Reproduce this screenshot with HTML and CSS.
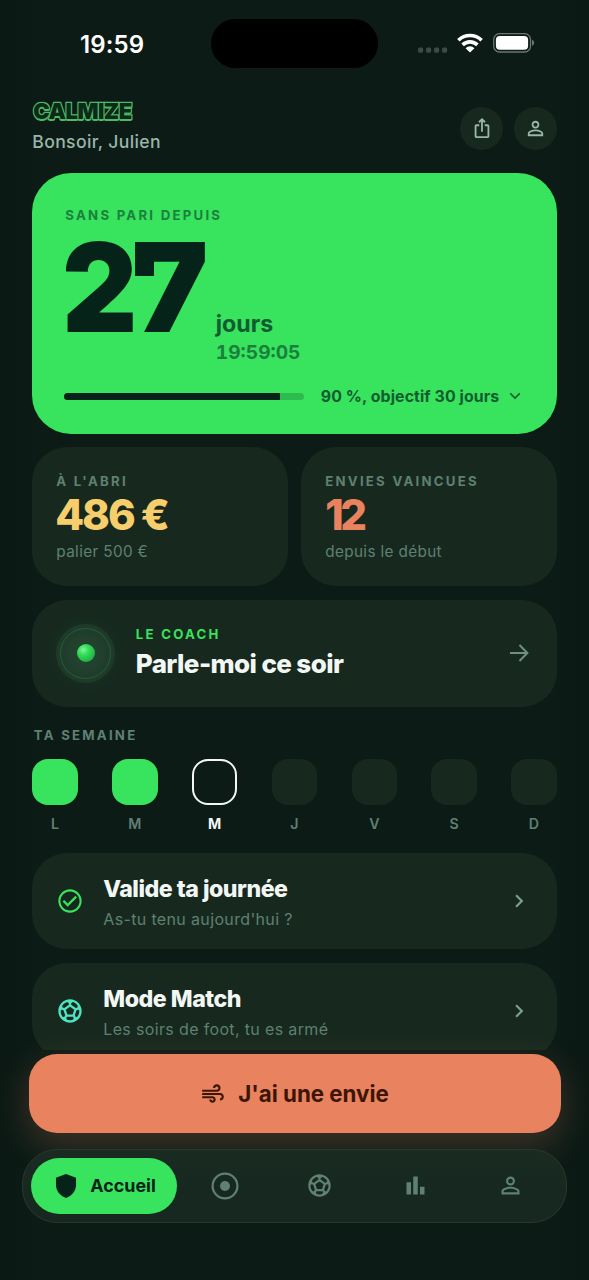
FILE: index.html
```html
<!DOCTYPE html>
<html lang="fr">
<head>
<meta charset="utf-8">
<title>Calmize</title>
<link rel="stylesheet" href="styles.css">
</head>
<body>
<svg class="defs" width="0" height="0" aria-hidden="true">
  <symbol id="i-person" viewBox="0 0 24 24"><path d="M12 5.9c1.16 0 2.1.94 2.1 2.1s-.94 2.1-2.1 2.1S9.9 9.16 9.9 8s.94-2.1 2.1-2.1m0 9c2.97 0 6.1 1.46 6.1 2.1v1.1H5.9V17c0-.64 3.13-2.1 6.1-2.1M12 4C9.79 4 8 5.79 8 8s1.79 4 4 4 4-1.79 4-4-1.79-4-4-4zm0 9c-2.67 0-8 1.34-8 4v3h16v-3c0-2.66-5.33-4-8-4z"/></symbol>
  <symbol id="i-ball" viewBox="0 0 24 24"><path d="M12 2C6.48 2 2 6.48 2 12s4.48 10 10 10 10-4.48 10-10S17.52 2 12 2zm1 3.3l1.35-.95c1.82.56 3.37 1.76 4.38 3.34l-.39 1.34-1.35.46L13 6.7V5.3zm-3.35-.95L11 5.3v1.4L7.01 9.49l-1.35-.46-.39-1.34c1.01-1.57 2.56-2.77 4.38-3.34zM7.08 17.11l-1.14.1C4.73 15.81 4 13.99 4 12c0-.12.01-.23.02-.35l1-.73 1.38.48 1.46 4.34-.78 1.37zm7.42 2.48c-.79.26-1.63.41-2.5.41s-1.71-.15-2.5-.41l-.69-1.49.64-1.1h5.11l.64 1.11-.7 1.48zM14.27 15H9.73l-1.35-4.02L12 8.44l3.63 2.54L14.27 15zm3.79 2.21l-1.14-.1-.79-1.37 1.46-4.34 1.39-.47 1 .73c.01.11.02.22.02.34 0 1.99-.73 3.81-1.94 5.21z"/></symbol>
  <symbol id="i-chevron" viewBox="0 0 24 24"><path d="M10 6 8.59 7.41 13.17 12l-4.58 4.59L10 18l6-6z"/></symbol>
</svg>
<div class="phone">
  <div class="status">
    <span class="clock">19:59</span>
    <span class="island"></span>
    <span class="status-icons">
      <svg class="signal" width="30" height="6" viewBox="0 0 30 6"><rect x="0" y="0.5" width="5.2" height="5.2" rx="1.6"/><rect x="8" y="0.5" width="5.2" height="5.2" rx="1.6"/><rect x="16" y="0.5" width="5.2" height="5.2" rx="1.6"/><rect x="24" y="0.5" width="5.2" height="5.2" rx="1.6"/></svg>
      <svg class="wifi" width="26" height="20" viewBox="0 0 26 20"><g fill="none" stroke="#fff" stroke-width="3.6"><path d="M1.4 7.2a16.8 16.8 0 0 1 23.2 0"/><path d="M5.6 11.9a10.6 10.6 0 0 1 14.8 0"/></g><path fill="#fff" d="M8.6 15.2a6.2 6.2 0 0 1 8.8 0L13 19.6z"/></svg>
      <svg class="battery" width="42" height="20" viewBox="0 0 42 20"><rect x=".7" y=".7" width="36.8" height="18.3" rx="5.8" fill="none" stroke="#6b7572" stroke-width="1.3"/><rect x="2.9" y="2.9" width="32.2" height="13.8" rx="3.9" fill="#fff"/><path d="M39 6.8c2.9 1 2.9 5 0 6z" fill="#6b7572"/></svg>
    </span>
  </div>

  <main class="scroll">
    <header class="header">
      <div class="brand">
        <div class="logo">CALMIZE</div>
        <div class="hello">Bonsoir, Julien</div>
      </div>
      <div class="actions">
        <span class="round"><svg width="22" height="22" viewBox="0 0 24 24"><path d="M16 5l-1.42 1.42-1.59-1.59V16h-1.98V4.83L9.42 6.42 8 5l4-4 4 4zm4 5v11c0 1.1-.9 2-2 2H6c-1.11 0-2-.9-2-2V10c0-1.11.89-2 2-2h3v2H6v11h12V10h-3V8h3c1.1 0 2 .89 2 2z"/></svg></span>
        <span class="round"><svg width="23" height="23"><use href="#i-person"/></svg></span>
      </div>
    </header>

    <section class="hero">
      <div class="label hero-label">SANS PARI DEPUIS</div>
      <div class="count">
        <div class="number"><span class="two">2</span><span class="seven">7</span></div>
        <div class="unit">
          <div class="days">jours</div>
          <div class="timer">19:59:05</div>
        </div>
      </div>
      <div class="goal">
        <div class="bar"><div class="fill" style="width:90%"></div></div>
        <div class="goal-text">90 %, objectif 30 jours</div>
        <svg width="12" height="8" viewBox="0 0 12 8"><path d="M1.3 1.4 6 6.1l4.7-4.7" fill="none" stroke="#155d31" stroke-width="1.5"/></svg>
      </div>
    </section>

    <section class="stats">
      <div class="card stat">
        <div class="label">À L'ABRI</div>
        <div class="value gold">486 €</div>
        <div class="sub">palier 500 €</div>
      </div>
      <div class="card stat">
        <div class="label">ENVIES VAINCUES</div>
        <div class="value coral">12</div>
        <div class="sub">depuis le début</div>
      </div>
    </section>

    <section class="card coach">
      <div class="orb"><div class="ring"><div class="core"></div></div></div>
      <div class="grow">
        <div class="label green">LE COACH</div>
        <div class="coach-title">Parle-moi ce soir</div>
      </div>
      <svg class="arrow" width="28" height="28" viewBox="0 0 24 24"><path d="M4.3 12H19M12.4 5.2l6.8 6.8-6.8 6.8" fill="none" stroke="#6f9080" stroke-width="1.7"/></svg>
    </section>

    <div class="label week-label">TA SEMAINE</div>
    <section class="week">
      <div class="day done"><i></i>L</div>
      <div class="day done"><i></i>M</div>
      <div class="day today"><i></i>M</div>
      <div class="day"><i></i>J</div>
      <div class="day"><i></i>V</div>
      <div class="day"><i></i>S</div>
      <div class="day"><i></i>D</div>
    </section>

    <section class="card row">
      <svg class="row-icon check" width="28" height="28" viewBox="0 0 24 24"><path d="M12 2C6.48 2 2 6.48 2 12s4.48 10 10 10 10-4.48 10-10S17.52 2 12 2zm0 18.2c-4.52 0-8.2-3.68-8.2-8.2S7.48 3.8 12 3.8s8.2 3.68 8.2 8.2-3.68 8.2-8.2 8.2zM16.6 7.5 10 14.1l-3-3L5.6 12.5l4.4 4.4 8-8z"/></svg>
      <div class="grow">
        <div class="row-title">Valide ta journée</div>
        <div class="sub">As-tu tenu aujourd'hui ?</div>
      </div>
      <svg class="chev" width="26" height="26"><use href="#i-chevron"/></svg>
    </section>

    <section class="card row">
      <svg class="row-icon match" width="28" height="28"><use href="#i-ball"/></svg>
      <div class="grow">
        <div class="row-title">Mode Match</div>
        <div class="sub">Les soirs de foot, tu es armé</div>
      </div>
      <svg class="chev" width="26" height="26"><use href="#i-chevron"/></svg>
    </section>
  </main>

  <div class="urge">
    <svg width="26" height="26" viewBox="0 0 24 24"><path d="M14.5 17c0 1.65-1.35 3-3 3s-3-1.35-3-3h2c0 .55.45 1 1 1s1-.45 1-1-.45-1-1-1H2v-2h9.5c1.65 0 3 1.35 3 3zM19 6.5C19 4.57 17.43 3 15.5 3S12 4.57 12 6.5h2c0-.83.67-1.5 1.5-1.5s1.5.67 1.5 1.5S16.33 8 15.5 8H2v2h13.5c1.93 0 3.5-1.57 3.5-3.5zm-.5 4.5H2v2h16.5c.83 0 1.5.67 1.5 1.5s-.67 1.5-1.5 1.5v2c1.93 0 3.5-1.57 3.5-3.5S20.43 11 18.5 11z"/></svg>
    <span>J'ai une envie</span>
  </div>

  <nav class="nav">
    <div class="tab active">
      <svg width="28" height="28" viewBox="0 0 24 24"><path d="M12 1.8 3.4 5v6.2c0 5 3.7 9.6 8.6 11 4.9-1.4 8.6-6 8.6-11V5z"/></svg>
      <span>Accueil</span>
    </div>
    <div class="tab"><svg width="28" height="28" viewBox="0 0 28 28"><circle cx="14" cy="14" r="12.4" fill="none" stroke="#5f8072" stroke-width="2.2"/><circle cx="14" cy="14" r="5"/></svg></div>
    <div class="tab"><svg width="27" height="27"><use href="#i-ball"/></svg></div>
    <div class="tab"><svg width="27" height="27" viewBox="0 0 24 24"><path d="M4 9h4v11H4zm12 4h4v7h-4zM10 4h4v16h-4z"/></svg></div>
    <div class="tab"><svg width="27" height="27"><use href="#i-person"/></svg></div>
  </nav>
</div>
</body>
</html>
```

FILE: styles.css
```css
* { box-sizing: border-box; }
body {
  margin: 0;
  background: #0c1a15;
  font-family: Inter, "Liberation Sans", sans-serif;
  font-optical-sizing: none;
  color: #f2f7f4;
}
.defs { position: absolute; }
svg { display: block; flex: none; fill: currentColor; }
.phone {
  width: 589px;
  height: 1280px;
  display: flex;
  flex-direction: column;
  overflow: hidden;
  background: linear-gradient(90deg, #0b1914 0%, #0c1b16 6%, #0c1b16 94%, #0b1914 100%);
}

/* Status bar */
.status {
  flex: none;
  height: 98px;
  padding-top: 19px;
  display: grid;
  grid-template-columns: 211px 167px 1fr;
  align-items: start;
}
.clock {
  padding-left: 80px;
  font-size: 24px;
  font-weight: 600;
  line-height: 51px;
  letter-spacing: 0.1px;
  color: #fff;
}
.island { height: 49px; border-radius: 25px; background: #000; }
.status-icons { display: flex; padding: 14px 0 0 40px; }
.signal { margin-top: 14px; color: #3e4a46; }
.wifi { margin-left: 9px; }
.battery { margin-left: 10px; }

/* Scrolling content */
.scroll {
  flex: none;
  height: 951.5px;
  padding: 2px 32.3px 0;
  overflow: hidden;
}
.header { display: flex; justify-content: space-between; height: 73px; }
.logo {
  height: 23px;
  padding-left: 1px;
  font-size: 22px;
  font-weight: 900;
  line-height: 23px;
  letter-spacing: -0.5px;
  color: #0d2a18;
  -webkit-text-stroke: 2.4px #4fb866;
  paint-order: stroke fill;
  text-shadow: 0 1px 0 #4fb866, 0 1.6px 0 #4fb866;
}
.hello {
  margin-top: 8px;
  font-size: 17.6px;
  font-weight: 500;
  line-height: 22px;
  letter-spacing: 0.35px;
  color: #9ab5a9;
}
.actions { display: flex; gap: 10.5px; padding-top: 6.5px; }
.round {
  width: 43px;
  height: 43px;
  border-radius: 50%;
  display: grid;
  place-items: center;
  background: #17291f;
  color: #9ab5a9;
}

.label {
  font-size: 13.2px;
  font-weight: 700;
  line-height: 16px;
  letter-spacing: 2.25px;
  color: #5f8072;
}

.hero {
  height: 260.5px;
  padding: 34px 36px 0 32px;
  border-radius: 39px;
  background: #38e35d;
}
.hero-label { padding-left: 1px; color: #1b7f3e; }
.count { display: flex; align-items: baseline; height: 148px; padding-top: 2px; }
.number {
  width: 151.5px;
  font-size: 124px;
  font-weight: 900;
  line-height: 124px;
  letter-spacing: -8px;
  white-space: nowrap;
  color: #06231a;
}
.two {
  display: inline-block;
  margin-left: -2px;
  transform: scaleX(0.94);
  transform-origin: left;
}
.seven { position: relative; }
.seven::before {
  content: "";
  position: absolute;
  left: 1px;
  top: 30px;
  width: 19px;
  height: 34px;
  background: #06231a;
}
.days { font-size: 23.2px; font-weight: 700; line-height: 28px; color: #125c31; }
.timer {
  font-size: 19.2px;
  font-weight: 700;
  line-height: 28px;
  font-variant-numeric: tabular-nums;
  color: #1b7f3e;
}
.goal { display: flex; align-items: center; margin-top: 15px; height: 20px; }
.bar { flex: none; width: 240px; height: 7px; border-radius: 4px; overflow: hidden; background: #2dba4e; }
.fill { height: 100%; background: #06231a; }
.goal-text {
  margin: 0 10px 0 16.5px;
  font-size: 15.9px;
  font-weight: 700;
  letter-spacing: 0.08px;
  white-space: nowrap;
  color: #125c31;
}

.card { border-radius: 35px; background: #17291f; }
.stats { display: grid; grid-template-columns: 1fr 1fr; gap: 13.5px; margin-top: 13.5px; }
.stat { height: 139px; padding: 26px 24px 0; }
.value { font-size: 42px; font-weight: 800; line-height: 51px; letter-spacing: -2.1px; }
.gold { margin-left: -1px; color: #f6cf6c; }
.coral { letter-spacing: -3.5px; color: #e9825f; }
.sub {
  font-size: 15.3px;
  font-weight: 400;
  line-height: 24px;
  letter-spacing: 0.35px;
  color: #5f8072;
}

.coach {
  display: flex;
  align-items: center;
  height: 106.5px;
  margin-top: 14px;
  padding: 0 24px;
}
.orb {
  width: 59px;
  height: 59px;
  margin-right: 20.5px;
  border-radius: 50%;
  display: grid;
  place-items: center;
  background: radial-gradient(#244832 0%, #1f3b2b 60%, #1c3427 100%);
  box-shadow: 0 0 18px rgba(56, 227, 93, 0.05);
}
.ring {
  width: 51px;
  height: 51px;
  border: 1px solid #22602f;
  border-radius: 50%;
  display: grid;
  place-items: center;
}
.core {
  width: 18px;
  height: 18px;
  border-radius: 50%;
  background: radial-gradient(circle at 35% 32%, #7df795 0%, #35db59 32%, #18a83c 85%);
}
.grow { flex: 1; }
.green { color: #38e35d; }
.coach-title { margin-top: 5px; font-size: 26px; font-weight: 800; line-height: 34px; letter-spacing: -0.6px; }

.week-label { margin: 20.5px 0 16px 1.5px; }
.week { display: flex; justify-content: space-between; }
.day {
  width: 45.5px;
  text-align: center;
  font-size: 14.2px;
  font-weight: 600;
  line-height: 20px;
  color: #5f8072;
}
.day i {
  display: block;
  height: 45.5px;
  margin-bottom: 9px;
  border-radius: 16px;
  background: #17291f;
}
.done i { background: #38e35d; }
.today { font-weight: 700; color: #f2f7f4; }
.today i { background: none; border: 2px solid #f2f7f4; }

.row {
  display: flex;
  align-items: center;
  height: 96px;
  margin-top: 14px;
  padding: 0 25px 0 24px;
}
.week + .row { margin-top: 19.5px; }
.row-icon { margin-right: 19px; }
.check { color: #38e35d; }
.match { color: #4fe3c1; }
.row-title { padding-top: 2px; font-size: 23.2px; font-weight: 800; line-height: 30px; letter-spacing: -0.5px; }
.row .sub { margin-top: 3px; font-size: 16px; }
.chev { color: #7d9e90; }

/* Bottom actions */
.urge {
  flex: none;
  position: relative;
  margin: 4.5px 28.5px 0;
  height: 79px;
  border-radius: 28px;
  display: flex;
  align-items: center;
  justify-content: center;
  gap: 12px;
  background: #e9825f;
  box-shadow: 0 12px 36px rgba(233, 130, 95, 0.24);
  color: #3d1505;
  font-size: 22.3px;
  font-weight: 700;
}
.nav {
  flex: none;
  position: relative;
  height: 74.5px;
  margin: 15.5px 22px 0;
  padding: 0 8px;
  border: 1px solid #27392f;
  border-radius: 35px;
  display: flex;
  align-items: center;
  background: linear-gradient(#1a2c22, #16281f 55%);
}
.tab { flex: 1; display: grid; place-items: center; color: #5f8072; }
.active {
  flex: 0 0 146px;
  height: 56.5px;
  border-radius: 28.25px;
  display: flex;
  align-items: center;
  justify-content: center;
  gap: 10px;
  background: #38e35d;
  color: #06231a;
  font-size: 17.9px;
  font-weight: 700;
}
```
